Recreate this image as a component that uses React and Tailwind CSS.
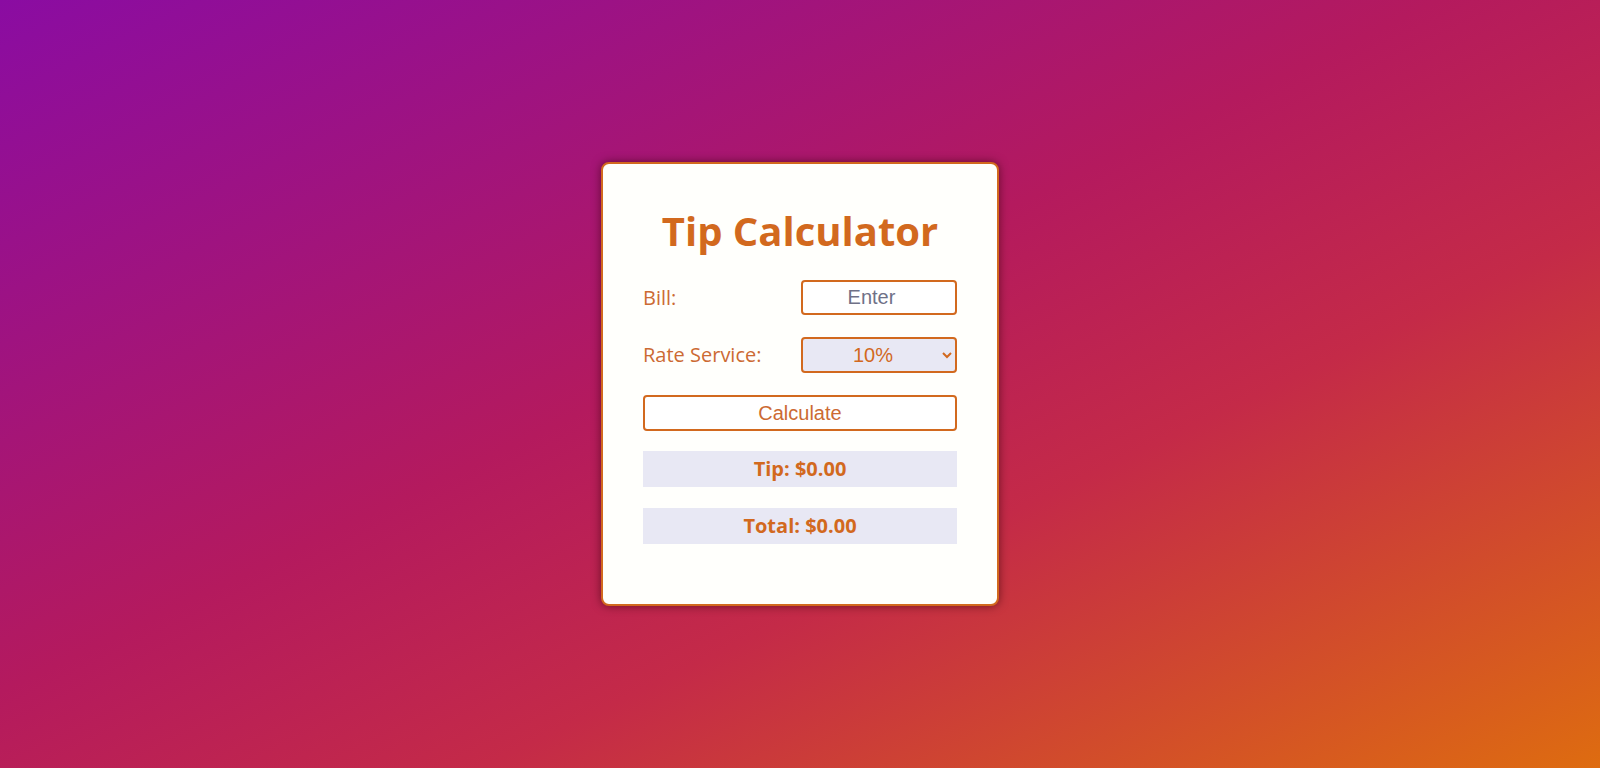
import { useState } from "react"

export default function App() {
  const [bill, setBill] = useState("")
  const [rate, setRate] = useState("0.1")
  const [tip, setTip] = useState(0)
  const [total, setTotal] = useState(0)

  const calculate = () => {
    const amount = parseFloat(bill) || 0
    const t = amount * parseFloat(rate)
    setTip(t)
    setTotal(amount + t)
  }

  return (
    <main className="min-h-screen flex items-center justify-center bg-[linear-gradient(to_bottom_right,#8a0ca2,#b41a5e_45%,#c42a48_65%,#de6c10)] font-['Open_Sans',sans-serif]">
      <div className="w-[398px] bg-[#fffffc] border-2 border-[#d2691e] rounded-lg shadow-[0_0_10px_rgba(40,0,0,0.55)] p-10 flex flex-col text-[#d2691e]">
        <h1 className="text-[40px] leading-[54px] font-bold text-center">Tip Calculator</h1>

        <div className="mt-[22px] flex items-center justify-between h-[35px]">
          <label className="text-[20px] text-[#cc6a33]">Bill:</label>
          <input
            type="number"
            value={bill}
            onChange={(e) => setBill(e.target.value)}
            placeholder="Enter"
            className="w-[156px] h-[35px] border-2 border-[#d2691e] rounded-[4px] bg-white text-center text-[20px] font-['Liberation_Sans',Arial,sans-serif] outline-none placeholder:text-[#6f7187]"
          />
        </div>

        <div className="mt-[22px] flex items-center justify-between h-[36px]">
          <label className="text-[20px] text-[#cc6a33]">Rate Service:</label>
          <select
            value={rate}
            onChange={(e) => setRate(e.target.value)}
            className="w-[156px] h-[36px] border-2 border-[#d2691e] rounded-[4px] bg-[#e8e8f4] text-center [text-align-last:center] text-[20px] text-[#d2691e] font-['Liberation_Sans',Arial,sans-serif] outline-none"
          >
            <option value="0.1">10%</option>
            <option value="0.15">15%</option>
            <option value="0.2">20%</option>
            <option value="0.25">25%</option>
          </select>
        </div>

        <button
          onClick={calculate}
          className="mt-[22px] h-[36px] w-full border-2 border-[#d2691e] rounded-[4px] bg-white text-[20px] text-[#cc6a33] font-['Liberation_Sans',Arial,sans-serif]"
        >
          Calculate
        </button>

        <div className="mt-[20px] h-[36px] bg-[#e8e8f4] flex items-center justify-center text-[20px] font-bold">
          Tip: ${tip.toFixed(2)}
        </div>

        <div className="mt-[21px] mb-[20px] h-[36px] bg-[#e8e8f4] flex items-center justify-center text-[20px] font-bold">
          Total: ${total.toFixed(2)}
        </div>
      </div>
    </main>
  )
}
